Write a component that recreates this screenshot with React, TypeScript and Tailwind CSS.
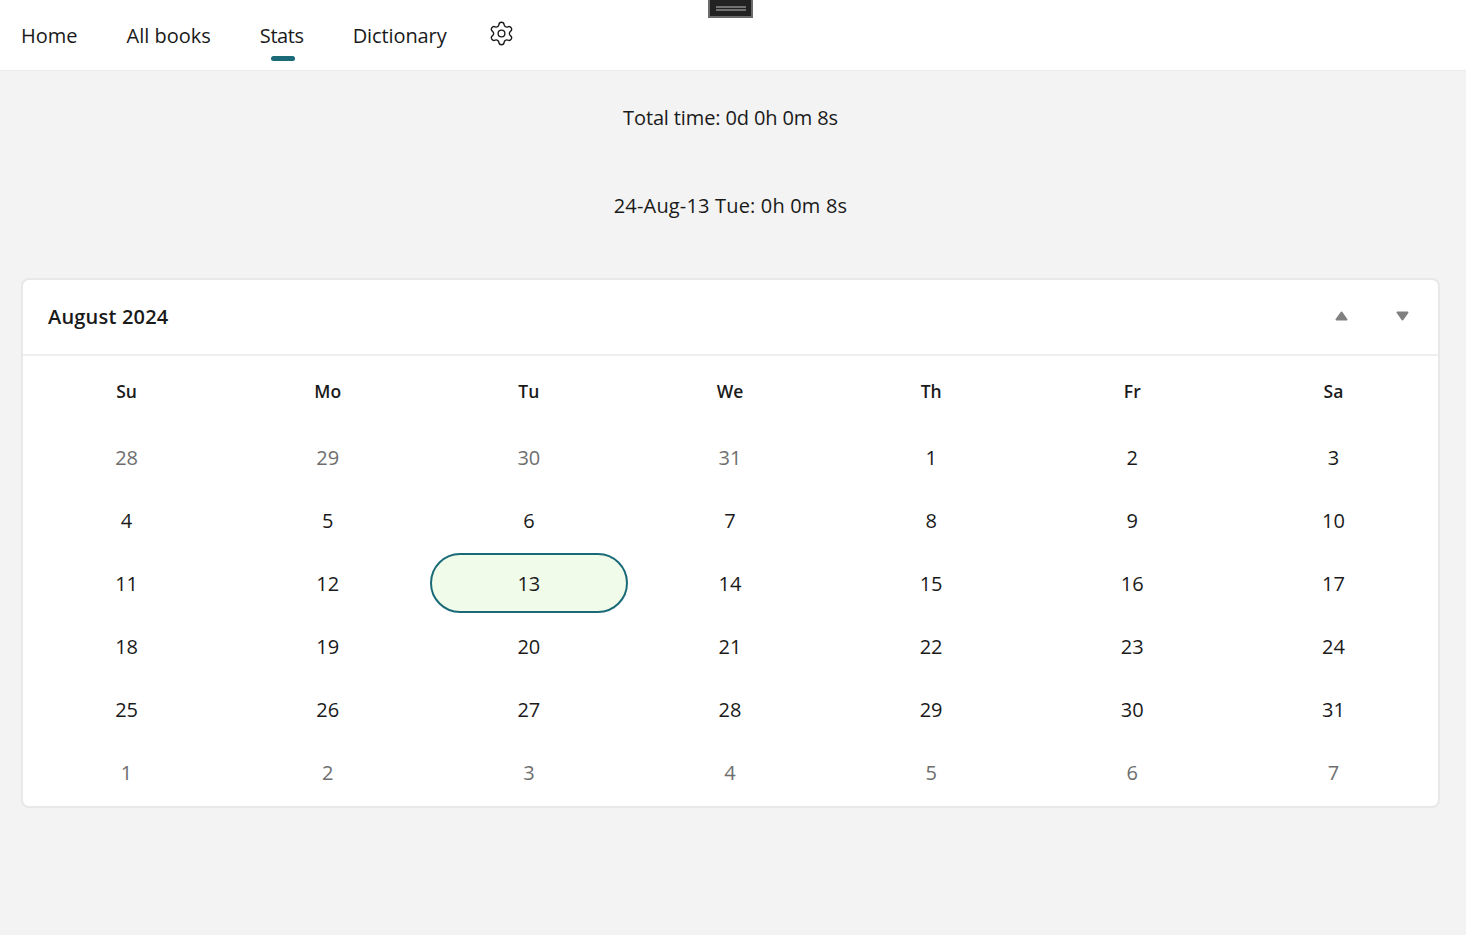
import { Settings } from "lucide-react";

const weekDays = ["Su", "Mo", "Tu", "We", "Th", "Fr", "Sa"];

const days: { n: number; muted?: boolean; sel?: boolean }[] = [
  { n: 28, muted: true },
  { n: 29, muted: true },
  { n: 30, muted: true },
  { n: 31, muted: true },
  ...Array.from({ length: 31 }, (_, i) => ({ n: i + 1, sel: i + 1 === 13 })),
  ...[1, 2, 3, 4, 5, 6, 7].map((n) => ({ n, muted: true })),
];

function Tab({ label, active, className }: { label: string; active?: boolean; className?: string }) {
  return (
    <div className="relative h-[70px] flex items-center pt-[1px]">
      <span className={className}>{label}</span>
      {active && (
        <span className="absolute left-[11px] top-[56px] w-6 h-[5px] rounded-full bg-[#1a6a78]" />
      )}
    </div>
  );
}

export default function App() {
  return (
    <div className="relative min-h-[935px] bg-[#f3f3f3] text-[20px] leading-7 text-[#1a1a1a] font-['Open_Sans','Noto_Sans',sans-serif]">
      <div className="absolute left-[708px] top-0 w-[45px] h-[18px] bg-[#222] border-2 border-[#6b6b6b] border-t-0 flex flex-col items-center justify-center gap-[1px] pt-[1px]">
        <span className="w-[30px] h-[2px] bg-[#707070]" />
        <span className="w-[30px] h-[2px] bg-[#707070]" />
      </div>

      <nav className="h-[71px] bg-white border-b border-[#ebebeb] flex pl-[21px] gap-[49px]">
        <Tab label="Home" />
        <Tab label="All books" />
        <Tab label="Stats" active className="tracking-[-0.4px]" />
        <Tab label="Dictionary" className="tracking-[-0.1px]" />
        <div className="h-[70px] flex items-center pb-[3px] -ml-[8px]">
          <Settings size={27} strokeWidth={1.2} />
        </div>
      </nav>

      <main className="pr-[5px]">
        <div className="pt-[33px] text-center">
          <p className="tracking-[-0.13px]">Total time: 0d 0h 0m 8s</p>
          <p className="mt-[60px] tracking-[0.17px]">24-Aug-13 Tue: 0h 0m 8s</p>
        </div>

        <section className="ml-[21px] mr-[21px] mt-[58px] h-[530px] bg-white border-2 border-[#e8e8e8] rounded-lg">
          <header className="h-[76px] flex items-center justify-between border-b-2 border-[#efefef] pl-[25px] pr-[29px]">
            <h2 className="font-semibold tracking-[0.2px]">August 2024</h2>
            <div className="flex gap-[48px] pb-[2px]">
              <svg width="13" height="10" viewBox="0 0 13 10" className="fill-[#808080]">
                <path d="M6.5 1.5 L11.5 8.5 H1.5 Z" stroke="#808080" strokeWidth="2" strokeLinejoin="round" />
              </svg>
              <svg width="13" height="10" viewBox="0 0 13 10" className="fill-[#808080]">
                <path d="M6.5 8.5 L11.5 1.5 H1.5 Z" stroke="#808080" strokeWidth="2" strokeLinejoin="round" />
              </svg>
            </div>
          </header>

          <div className="grid grid-cols-7 pl-[3px] pr-[4px] pt-[23px] text-center">
            {weekDays.map((d) => (
              <div key={d} className="text-[17.5px] leading-6 font-semibold h-[34px]">
                {d}
              </div>
            ))}
          </div>
          <div className="grid grid-cols-7 auto-rows-[63px] pl-[3px] pr-[4px] pt-[13px] text-center">
            {days.map((d, i) => (
              <div key={i} className="flex items-center justify-center">
                {d.sel ? (
                  <div className="w-[198px] h-[60px] mb-[2px] pt-[2px] rounded-[30px] bg-[#f0fbe9] border-2 border-[#1a6a78] flex items-center justify-center">
                    {d.n}
                  </div>
                ) : (
                  <span className={d.muted ? "text-[#6e6e6e]" : ""}>{d.n}</span>
                )}
              </div>
            ))}
          </div>
        </section>
      </main>
    </div>
  );
}
